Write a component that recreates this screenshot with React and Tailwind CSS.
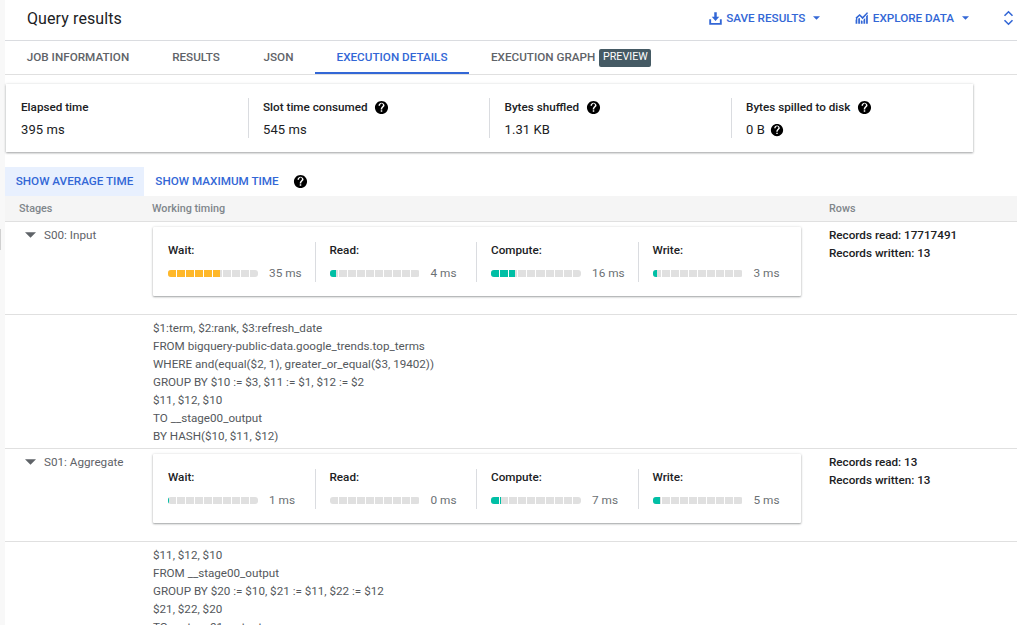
import React from "react";

const Help = ({ className = "w-[15px] h-[15px]" }) => (
  <svg viewBox="0 0 24 24" className={`shrink-0 ${className}`} fill="#000">
    <path d="M12 1.5C6.2 1.5 1.5 6.2 1.5 12S6.2 22.5 12 22.5 22.5 17.8 22.5 12 17.8 1.5 12 1.5zm1.2 17.4h-2.4v-2.4h2.4v2.4zm2.5-8.1l-1.1 1.1c-.9.9-1.4 1.6-1.4 3.2h-2.4v-.6c0-1.3.5-2.5 1.4-3.4l1.5-1.5c.4-.4.7-1 .7-1.6 0-1.3-1.1-2.4-2.4-2.4S9.6 7.7 9.6 9H7.2c0-2.6 2.2-4.8 4.8-4.8s4.8 2.2 4.8 4.8c0 .7-.4 1.3-1.1 1.8z" />
  </svg>
);

const Caret = ({ className = "w-[7px] h-[4px]" }) => (
  <svg viewBox="0 0 10 5" className={className} fill="currentColor">
    <path d="M0 0h10L5 5z" />
  </svg>
);

const Bar = ({ fill, color }) => {
  const segs = Array.from({ length: 10 }, (_, i) => Math.max(0, Math.min(8, fill - i * 9)));
  return (
    <div className="flex gap-px w-[90px] h-[7px] rounded-[3px] overflow-hidden shrink-0">
      {segs.map((w, i) => (
        <div key={i} className="flex-1 h-full bg-[#e0e0e0]">
          <div className="h-full" style={{ width: `${w}px`, backgroundColor: color }} />
        </div>
      ))}
    </div>
  );
};

const Timing = ({ label, value, fill, color = "#00bfa5", first }) => (
  <div className={`w-[161.5px] h-10 pt-[1px] ${first ? "pl-[15px]" : "pl-[14px] border-l border-[#dadce0]"}`}>
    <div className="text-[11.7px] leading-[14px] font-medium text-[#202124]">{label}</div>
    <div className="flex items-center mt-[9px] h-[16px]">
      <Bar fill={fill} color={color} />
      <div className="ml-[11px] mb-[2px] text-[11.8px] leading-4 text-[#6b7074] whitespace-nowrap">{value}</div>
    </div>
  </div>
);

const Stage = ({ name, items, r1, r2 }) => (
  <div className="flex h-[93px] border-b border-[#e0e0e0]">
    <div className="w-[148px] shrink-0 flex items-start pl-5 pt-[5px]">
      <Caret className="w-[11px] h-[6px] mt-[5px] text-[#5f6368]" />
      <span className="ml-2 text-[11.7px] leading-4 text-[#5f6368] whitespace-nowrap">{name}</span>
    </div>
    <div className="w-[676px] shrink-0 pt-[5px]">
      <div className="w-[648px] h-[69px] bg-white flex items-center shadow-[0_1px_2px_rgba(60,64,67,0.45),0_0_3px_rgba(60,64,67,0.12)] rounded-[1px]">
        {items.map((t, i) => (
          <Timing key={t.label} {...t} first={i === 0} />
        ))}
      </div>
    </div>
    <div className="pt-[4px] text-[11.7px] leading-[18px] font-medium text-[#202124]">
      <div>Records read: {r1}</div>
      <div>Records written: {r2}</div>
    </div>
  </div>
);

const Sql = ({ lines }) => (
  <div className="pl-[148px] pt-[4px] pb-[3px] border-b border-[#e0e0e0] text-[11.65px] leading-[18px] text-[#54585c]">
    {lines.map((l) => (
      <div key={l}>{l}</div>
    ))}
  </div>
);

const Stat = ({ label, value, help, help2, first }) => (
  <div className={`w-[241.5px] h-10 pt-[1.5px] ${first ? "pl-[15px]" : "pl-[14.5px] border-l border-[#dadce0]"}`}>
    <div className="flex items-center h-[16px] text-[11.7px] font-medium text-[#202124] gap-[6.5px]">
      {label}
      {help && <Help />}
    </div>
    <div className="flex items-center mt-[5px] h-[18px] text-[13px] text-[#202124] gap-[5px] tracking-[0.1px]">
      {value}
      {help2 && <Help className="w-[14px] h-[14px]" />}
    </div>
  </div>
);

const Tab = ({ children, active, w }) => (
  <div
    className={`flex items-center justify-center h-[33px] text-[11.7px] font-medium whitespace-nowrap ${active ? "text-[#3367d6] border-b-[2px] border-[#3367d6] pt-[3px]" : "text-[#5f6368] pt-[1px]"} ${w}`}
  >
    {children}
  </div>
);

export default function App() {
  return (
    <div className="w-[1017px] h-[625px] overflow-hidden bg-[#f8f8f8] font-['Roboto',sans-serif] relative">
      <div className="absolute left-0 top-[229px] w-[1px] h-[21px] bg-[#d0d0d0]" />
      <div className="ml-[5px] bg-white h-full">
        <header className="flex items-center h-[41px] border-b border-[#dadce0] pl-[22px] pb-[3px]">
          <h1 className="text-[16px] text-[#202124] tracking-[0.1px]">Query results</h1>
          <div className="ml-auto flex items-center text-[11.7px] font-medium text-[#3367d6]">
            <svg viewBox="0 0 24 24" className="w-[15px] h-[15px]" fill="currentColor">
              <path d="M2 13h3v6h14v-6h3v9H2v-9zM10 2h4v7h4l-6 7-6-7h4V2z" />
            </svg>
            <span className="ml-[3px]">SAVE RESULTS</span>
            <Caret className="w-[7px] h-[4px] ml-[8px]" />
            <svg viewBox="0 0 24 24" className="w-[14px] h-[14px] ml-[34.5px]" fill="currentColor">
              <path d="M1 22v-7l3-3v10H1zm4.5 0v-9l3-1v10h-3zm4.5 0v-6l3 1v5h-3zm4.5 0v-7l3-3v10h-3zm4.5 0V9l3-3v16h-3zM1 11l7-6 5 5 7.5-8L22.500 3.500 13 14 8 8.500 2 14z" />
            </svg>
            <span className="ml-[4px]">EXPLORE DATA</span>
            <Caret className="w-[7px] h-[4px] ml-[7.5px]" />
            <svg viewBox="0 0 12 18" className="w-[11px] h-[16px] ml-[34px] mr-[3.5px]" fill="none" stroke="currentColor" strokeWidth="1.8">
              <path d="M1.500 6.500 6 2l4.500 4.500M1.500 11.500 6 16l4.500-4.500" />
            </svg>
          </div>
        </header>

        <nav className="flex items-center h-[34px] border-b border-[#e0e0e0]">
          <Tab w="w-[146px]">JOB INFORMATION</Tab>
          <Tab w="w-[90px]">RESULTS</Tab>
          <Tab w="w-[74px] pl-px">JSON</Tab>
          <Tab active w="w-[154px]">EXECUTION DETAILS</Tab>
          <div className="flex items-center h-[33px] pt-[1px] ml-[22px] text-[11.7px] font-medium text-[#5f6368] whitespace-nowrap">
            EXECUTION GRAPH
            <span className="ml-1 -mt-[1px] w-[52px] text-center h-[18px] leading-[16px] rounded-[2px] bg-[#455a64] text-white font-normal text-[10.7px]">PREVIEW</span>
          </div>
        </nav>

        <section className="mt-[9px] ml-px w-[967px] h-[68px] bg-white flex items-center shadow-[0_1px_2px_rgba(60,64,67,0.45),0_0_3px_rgba(60,64,67,0.12)]">
          <Stat first label="Elapsed time" value="395 ms" />
          <Stat help label="Slot time consumed" value="545 ms" />
          <Stat help label="Bytes shuffled" value="1.31 KB" />
          <Stat help help2 label="Bytes spilled to disk" value="0 B" />
        </section>

        <div className="flex items-center mt-[15px] h-[29px] text-[11.7px] font-medium text-[#3367d6]">
          <div className="w-[139px] h-full flex items-center justify-center bg-[#e8f0fe]">SHOW AVERAGE TIME</div>
          <div className="w-[146px] text-center">SHOW MAXIMUM TIME</div>
          <Help className="w-[15px] h-[15px] ml-[3px]" />
        </div>

        <div className="flex items-center h-[26px] pt-[1px] bg-[#f5f5f5] border-b border-[#e0e0e0] text-[10.8px] font-medium text-[#80868b]">
          <div className="w-[147px] pl-[14px]">Stages</div>
          <div className="w-[677px]">Working timing</div>
          <div>Rows</div>
        </div>

        <Stage
          name="S00: Input"
          r1="17717491"
          r2="13"
          items={[
            { label: "Wait:", value: "35 ms", fill: 52, color: "#ffb829" },
            { label: "Read:", value: "4 ms", fill: 6 },
            { label: "Compute:", value: "16 ms", fill: 24 },
            { label: "Write:", value: "3 ms", fill: 4 },
          ]}
        />
        <Sql
          lines={[
            "$1:term, $2:rank, $3:refresh_date",
            "FROM bigquery-public-data.google_trends.top_terms",
            "WHERE and(equal($2, 1), greater_or_equal($3, 19402))",
            "GROUP BY $10 := $3, $11 := $1, $12 := $2",
            "$11, $12, $10",
            "TO __stage00_output",
            "BY HASH($10, $11, $12)",
          ]}
        />
        <Stage
          name="S01: Aggregate"
          r1="13"
          r2="13"
          items={[
            { label: "Wait:", value: "1 ms", fill: 1 },
            { label: "Read:", value: "0 ms", fill: 0 },
            { label: "Compute:", value: "7 ms", fill: 10 },
            { label: "Write:", value: "5 ms", fill: 7 },
          ]}
        />
        <Sql
          lines={[
            "$11, $12, $10",
            "FROM __stage00_output",
            "GROUP BY $20 := $10, $21 := $11, $22 := $12",
            "$21, $22, $20",
            "TO __stage01_output",
          ]}
        />
      </div>
    </div>
  );
}
